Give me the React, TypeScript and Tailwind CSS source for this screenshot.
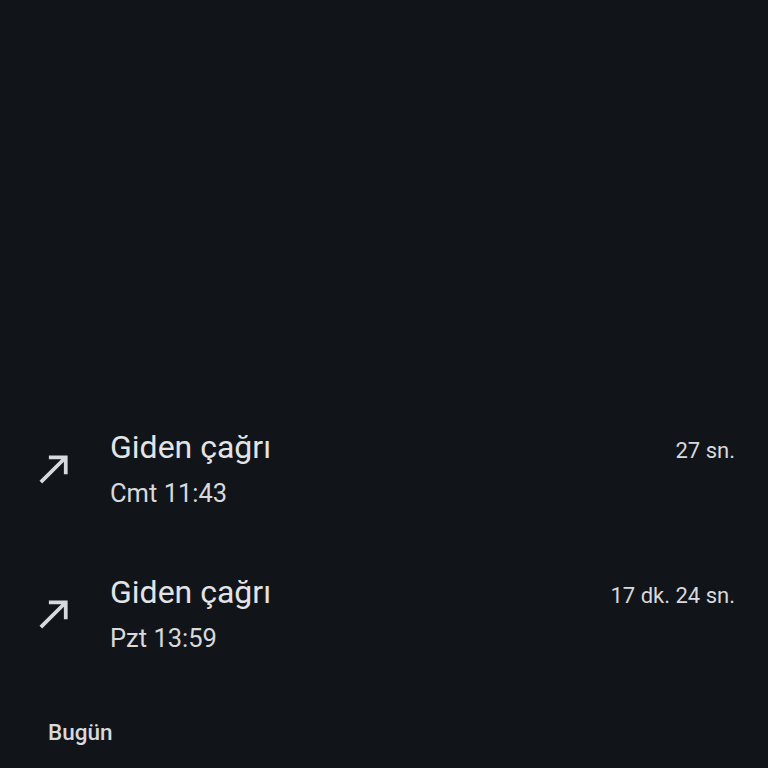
import React from 'react';

const calls = [
  { title: 'Giden çağrı', when: 'Cmt 11:43', duration: '27 sn.' },
  { title: 'Giden çağrı', when: 'Pzt 13:59', duration: '17 dk. 24 sn.' },
];

function OutgoingIcon() {
  return (
    <svg viewBox="0 0 24 24" className="w-[45px] h-[45px]" fill="#d7d9dc">
      <path d="M9 5v2h6.59L4 18.59 5.41 20 17 8.41V15h2V5z" />
    </svg>
  );
}

export default function App() {
  return (
    <div
      className="w-full h-[768px] overflow-hidden bg-[#111519] text-[#e3e4e6] flex flex-col"
      style={{ fontFamily: 'Roboto, "Noto Sans", sans-serif' }}
    >
      <div className="h-[401px] shrink-0" />
      {calls.map((c, i) => (
        <div key={i} className="flex items-center h-[145px] shrink-0 pl-[32px] pr-[33px] pb-[10px]">
          <div className="w-[78px] flex items-center">
            <OutgoingIcon />
          </div>
          <div className="flex-1 flex flex-col gap-[11px]">
            <div className="flex items-baseline justify-between">
              <span className="text-[32px] leading-[36px]">{c.title}</span>
              <span className="text-[22px] text-[#d7d9dc]">{c.duration}</span>
            </div>
            <span className="text-[25.5px] leading-[30px] text-[#d7d9dc]">{c.when}</span>
          </div>
        </div>
      ))}
      <div className="pl-[48px] pt-[25px] text-[22.5px] font-medium text-[#d7d9dc]">Bugün</div>
    </div>
  );
}
